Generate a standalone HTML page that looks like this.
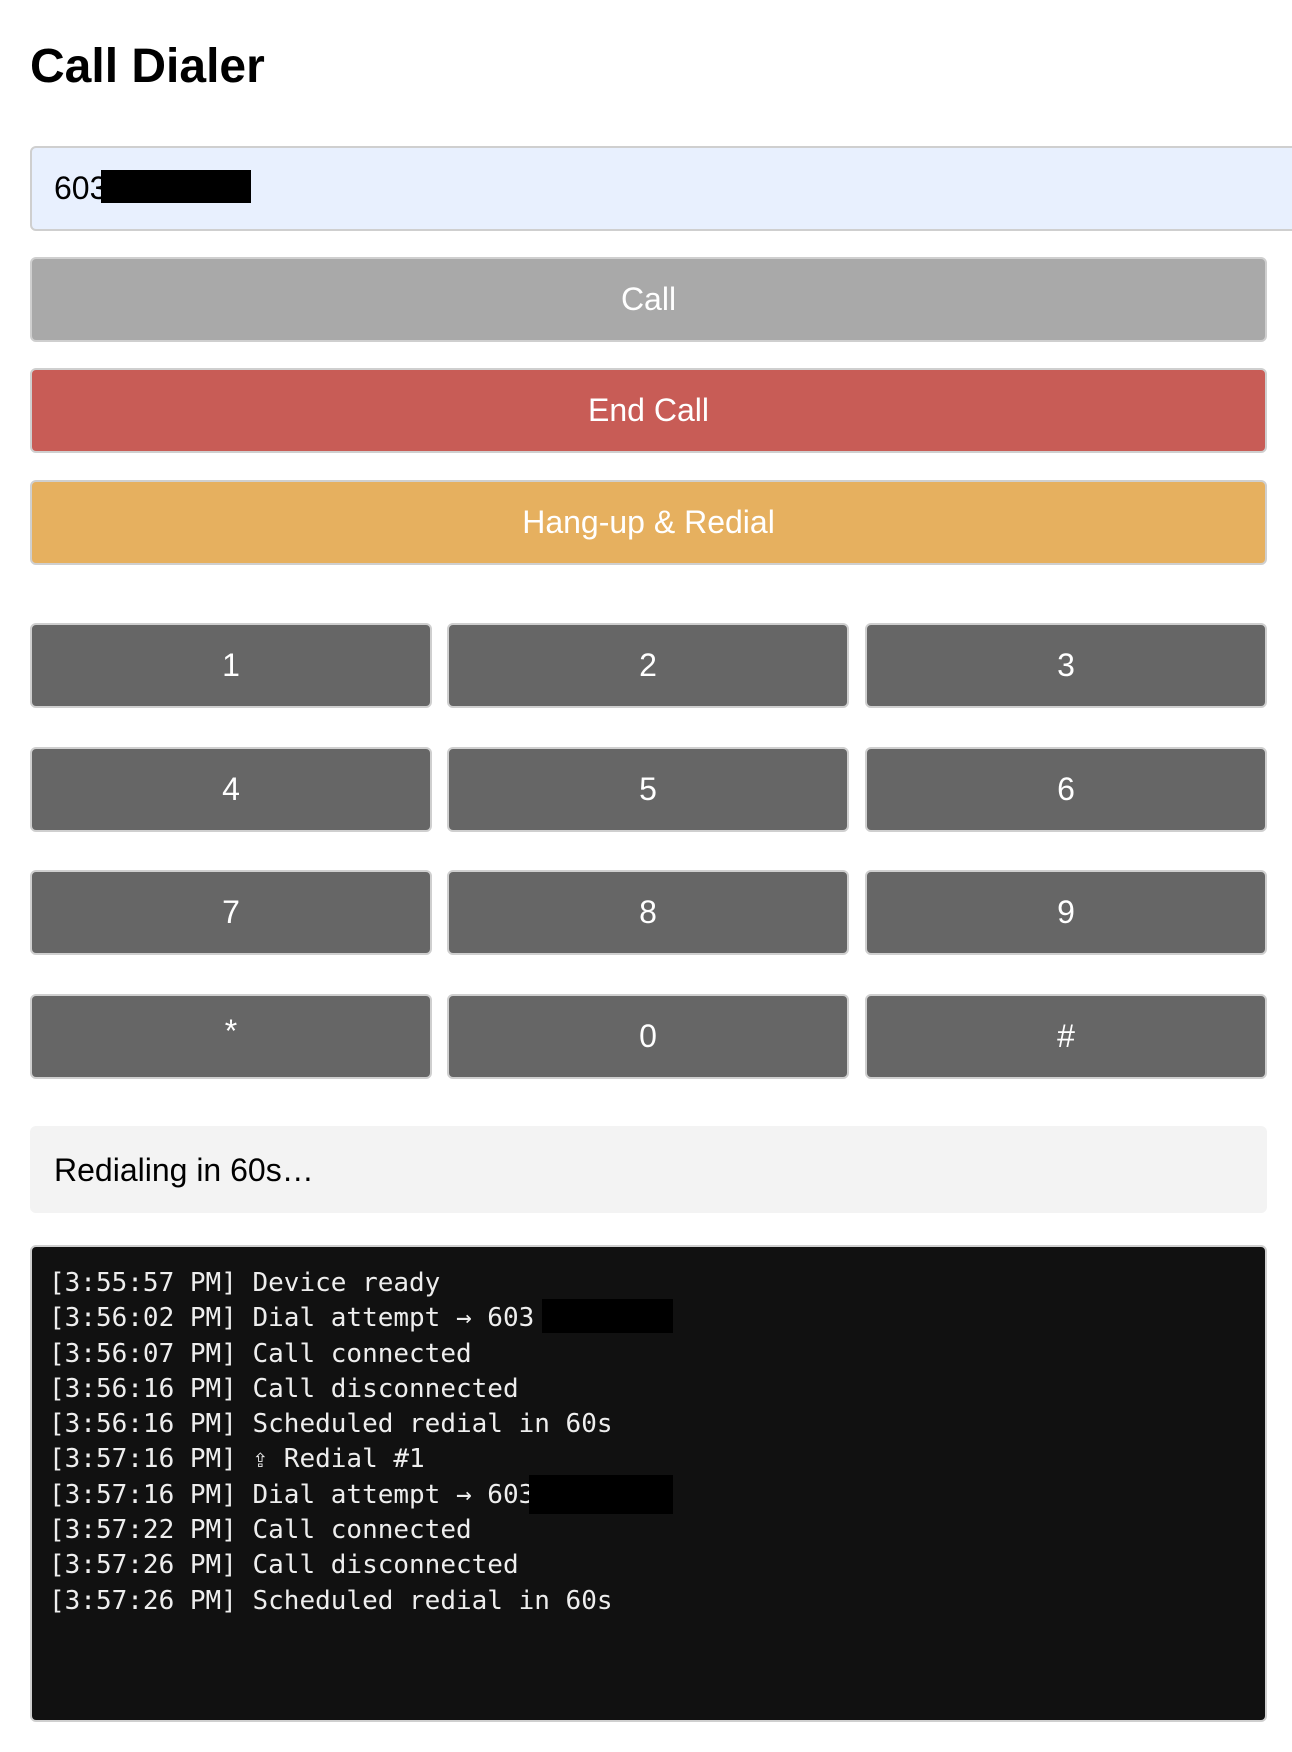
<!DOCTYPE html>
<html><head><meta charset="utf-8"><style>
*{box-sizing:border-box}
body{margin:0;width:1292px;height:1752px;background:#fff;font-family:"Liberation Sans",Arial,sans-serif;position:relative;overflow:hidden}
h1{position:absolute;left:30px;top:37px;margin:0;font-size:48px;font-weight:bold;line-height:60px}
.inp{position:absolute;left:30px;top:146px;width:1300px;height:85px;background:#e8f0fe;border:2px solid #cfcfcf;border-radius:6px;font-size:32px;padding-left:22px;line-height:81px}
.btn{position:absolute;left:30px;width:1237px;height:85px;border:2px solid #cfcfcf;border-radius:6px;color:#fff;font-size:32px;text-align:center;line-height:81px}
.k{position:absolute;width:402px;height:85px;background:#666;border:2px solid #cfcfcf;border-radius:6px;color:#fff;font-size:32px;text-align:center;line-height:81px}
.status{position:absolute;left:30px;top:1126px;width:1237px;height:87px;background:#f3f3f3;border-radius:6px;font-size:32px;padding-left:24px;line-height:89px}
.log{position:absolute;left:30px;top:1245px;width:1237px;height:477px;background:#111;border:2px solid #cfcfcf;border-radius:6px;color:#eee;font-family:"DejaVu Sans Mono","Liberation Mono",monospace;font-size:26px;line-height:35.3px;padding:19px 0 0 17px;white-space:pre}
.r{position:absolute;background:#000}
</style></head><body>
<h1>Call Dialer</h1>
<div class="inp">603</div>
<div class="r" style="left:101px;top:170px;width:150px;height:33px"></div>
<div class="btn" style="top:257px;background:#a9a9a9">Call</div>
<div class="btn" style="top:368px;background:#c85c56">End Call</div>
<div class="btn" style="top:480px;background:#e6b05f">Hang-up &amp; Redial</div>
<div class="k" style="left:30px;top:623px">1</div><div class="k" style="left:447px;top:623px">2</div><div class="k" style="left:865px;top:623px">3</div>
<div class="k" style="left:30px;top:747px">4</div><div class="k" style="left:447px;top:747px">5</div><div class="k" style="left:865px;top:747px">6</div>
<div class="k" style="left:30px;top:870px">7</div><div class="k" style="left:447px;top:870px">8</div><div class="k" style="left:865px;top:870px">9</div>
<div class="k" style="left:30px;top:994px;line-height:70px">*</div><div class="k" style="left:447px;top:994px">0</div><div class="k" style="left:865px;top:994px">#</div>
<div class="status">Redialing in 60s…</div>
<div class="log">[3:55:57 PM] Device ready
[3:56:02 PM] Dial attempt → 603
[3:56:07 PM] Call connected
[3:56:16 PM] Call disconnected
[3:56:16 PM] Scheduled redial in 60s
[3:57:16 PM] ⇪ Redial #1
[3:57:16 PM] Dial attempt → 603
[3:57:22 PM] Call connected
[3:57:26 PM] Call disconnected
[3:57:26 PM] Scheduled redial in 60s</div>
<div class="r" style="left:542px;top:1299px;width:131px;height:34px"></div>
<div class="r" style="left:529px;top:1475px;width:144px;height:39px"></div>
</body></html>
